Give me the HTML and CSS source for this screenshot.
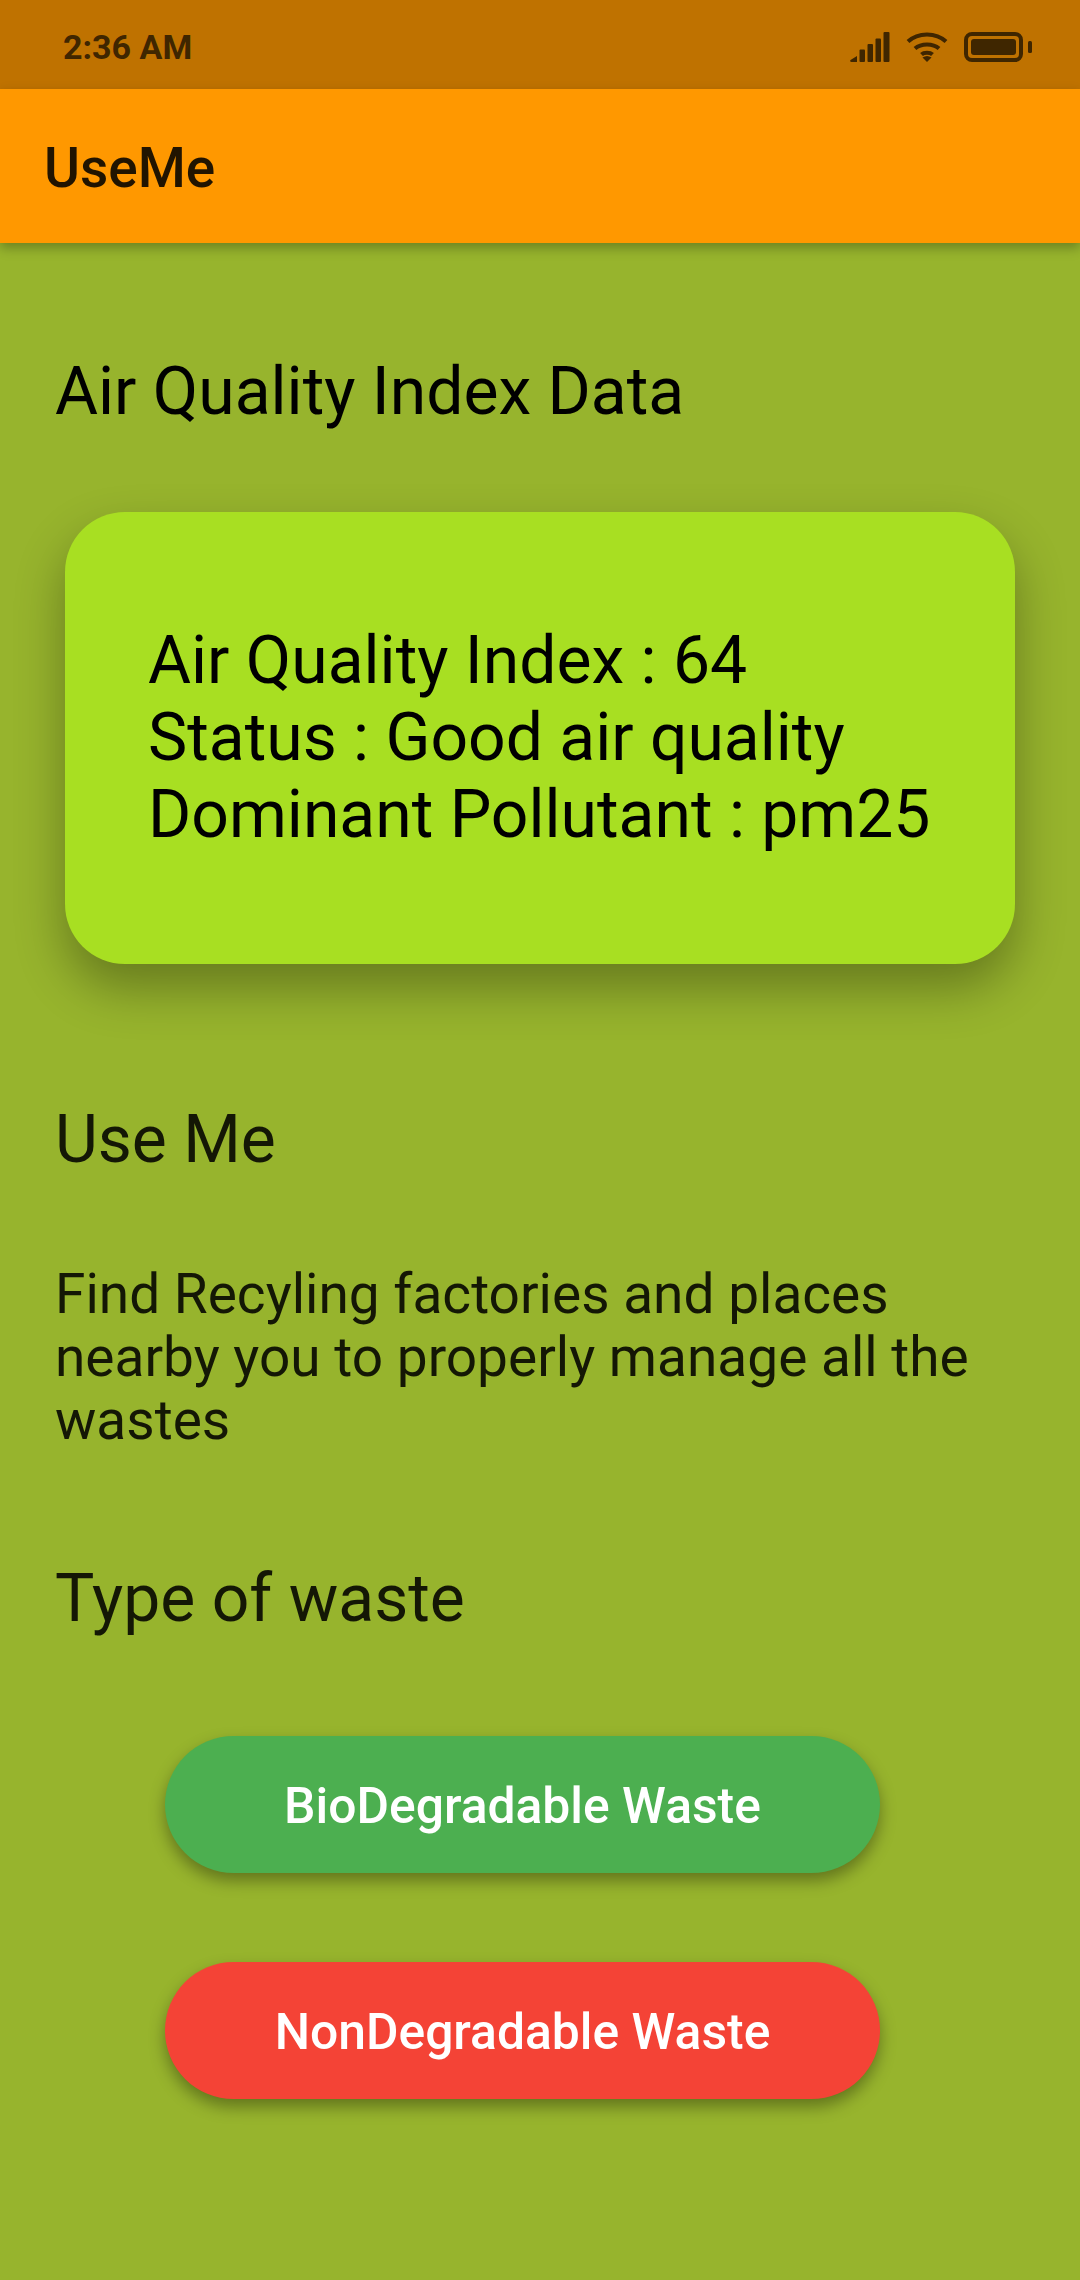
FILE: index.html
```html
<!DOCTYPE html>
<html>
<head>
  <meta charset="utf-8">
  <title>UseMe</title>
  <link rel="stylesheet" href="styles.css">
</head>
<body>
  <div class="status-bar">
    <span class="clock">2:36 AM</span>
    <div class="status-icons">
      <svg class="ic-signal" width="40" height="30" viewBox="0 0 40 30">
        <path d="M0.500 28 L7 24 V30 H1.500 Q-0.500 30 0.500 28Z"/>
        <rect x="9.500" y="17.500" width="5.500" height="12.500" rx="1"/>
        <rect x="17.500" y="12" width="5.500" height="18" rx="1"/>
        <rect x="25.500" y="6.500" width="5.500" height="23.500" rx="1"/>
        <rect x="33.500" y="0" width="6" height="30" rx="1"/>
      </svg>
      <svg class="ic-wifi" width="42" height="30" viewBox="0 0 42 30">
        <g fill="none" stroke-width="4">
          <path d="M2 9.500 C12 0 30 0 40 9.500"/>
          <path d="M9 16.500 C15 11 27 11 33 16.500"/>
          <path d="M15.500 22.500 C18 20 24 20 26.500 22.500"/>
        </g>
        <path class="wifi-dot" d="M21 30 L16.500 25.500 Q21 22.500 25.500 25.500Z"/>
      </svg>
      <svg class="ic-battery" width="68" height="30" viewBox="0 0 68 30">
        <rect class="batt-shell" x="2" y="2" width="55" height="26" rx="6"/>
        <rect x="7" y="7" width="45" height="16" rx="3"/>
        <rect x="64" y="9" width="4" height="12" rx="1.500"/>
      </svg>
    </div>
  </div>
  <header class="app-bar">UseMe</header>
  <main class="content">
    <h2 class="title">Air Quality Index Data</h2>
    <div class="aqi-card">
      <div>Air Quality Index : 64</div>
      <div>Status : Good air quality</div>
      <div>Dominant Pollutant : pm25</div>
    </div>
    <h2 class="title title-use">Use Me</h2>
    <p class="desc">Find Recyling factories and places nearby you to properly manage all the wastes</p>
    <h2 class="title title-type">Type of waste</h2>
    <div class="buttons">
      <button class="waste-btn bio">BioDegradable Waste</button>
      <button class="waste-btn non">NonDegradable Waste</button>
    </div>
  </main>
</body>
</html>
```

FILE: styles.css
```css
html, body {
  height: 100%;
  margin: 0;
}
body {
  display: flex;
  flex-direction: column;
  background-color: #97b42d;
  font-family: Roboto, sans-serif;
  color: #000;
  overflow: hidden;
}
.status-bar {
  height: 89px;
  flex: none;
  display: flex;
  align-items: center;
  justify-content: space-between;
  padding: 0 48px 0 63px;
  background-color: #bf7200;
  color: #3f2600;
}
.clock {
  font-size: 34px;
  font-weight: 700;
  padding-top: 4px;
}
.status-icons {
  display: flex;
  align-items: center;
  gap: 16px;
  padding-top: 5px;
}
.status-icons svg {
  fill: #3f2600;
  stroke: none;
}
.status-icons g {
  stroke: #3f2600;
}
.batt-shell {
  fill: none;
  stroke: #3f2600;
  stroke-width: 4;
}
.app-bar {
  height: 154px;
  flex: none;
  display: flex;
  align-items: center;
  padding: 3px 0 0 44px;
  box-sizing: border-box;
  background-color: #ff9800;
  color: rgba(0, 0, 0, 0.87);
  font-size: 55px;
  font-weight: 500;
  box-shadow: 0 5px 11px rgba(0, 0, 0, 0.28);
  position: relative;
}
.content {
  flex: 1;
  padding: 0 55px;
}
.title {
  margin: 0;
  font-size: 66px;
  font-weight: 400;
  line-height: 77px;
  color: rgba(0, 0, 0, 0.87);
}
.content > .title:first-child {
  margin-top: 110px;
  color: #000;
}
.aqi-card {
  margin: 82px 10px 0;
  height: 452px;
  box-sizing: border-box;
  padding: 110px 0 0 83px;
  border-radius: 60px;
  background-color: #a8df22;
  font-size: 66px;
  line-height: 77px;
  box-shadow: 0 24px 50px rgba(0, 0, 0, 0.32);
}
.title-use {
  margin-top: 137px;
}
.desc {
  margin: 85px 0 0;
  font-size: 55px;
  line-height: 63px;
  color: rgba(0, 0, 0, 0.87);
}
.title-type {
  margin-top: 108px;
}
.buttons {
  display: flex;
  flex-direction: column;
  gap: 89px;
  margin: 99px 0 0 110px;
}
.waste-btn {
  width: 715px;
  height: 137px;
  padding-top: 3px;
  border: none;
  border-radius: 69px;
  color: #fff;
  font-family: Roboto, sans-serif;
  font-size: 49.800px;
  font-weight: 500;
  box-shadow: 0 8px 16px rgba(0, 0, 0, 0.35);
}
.bio {
  background-color: #4caf50;
}
.non {
  background-color: #f44336;
}
```
